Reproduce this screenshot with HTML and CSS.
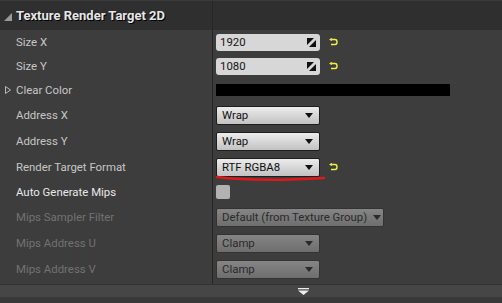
FILE: index.html
```html
<!DOCTYPE html>
<html lang="en">
<head>
  <meta charset="UTF-8">
  <title>Texture Render Target 2D</title>
  <link rel="stylesheet" href="styles.css">
</head>
<body>
  <div class="panel">

    <!-- Category header -->
    <div class="header">
      <div class="header-name">
        <svg class="collapse" width="8" height="8" viewBox="0 0 8 8"><polygon points="8,0 8,8 0,8" fill="#9a9a9a"/></svg>
        <span>Texture Render Target 2D</span>
      </div>
      <div class="header-value"></div>
    </div>

    <!-- Property rows -->
    <div class="rows">
      <div class="label r24">Size X</div>
      <div class="value">
        <div class="numbox"><span>1920</span>
          <svg width="9" height="9" viewBox="0 0 9 9"><polygon points="0,0 7,0 0,7" fill="#111"/><polygon points="9,2 9,9 2,9" fill="#111"/></svg>
        </div>
        <svg class="reset" width="9" height="8" viewBox="0 0 9 8"><path d="M1 1.5 H6 Q8 1.5 8 4 Q8 6.5 6 6.5 H2" fill="none" stroke="#f0f040" stroke-width="1.4"/><polygon points="0,1.5 3,0 3,3" fill="#f0f040"/></svg>
      </div>

      <div class="label r24">Size Y</div>
      <div class="value">
        <div class="numbox"><span>1080</span>
          <svg width="9" height="9" viewBox="0 0 9 9"><polygon points="0,0 7,0 0,7" fill="#111"/><polygon points="9,2 9,9 2,9" fill="#111"/></svg>
        </div>
        <svg class="reset" width="9" height="8" viewBox="0 0 9 8"><path d="M1 1.5 H6 Q8 1.5 8 4 Q8 6.5 6 6.5 H2" fill="none" stroke="#f0f040" stroke-width="1.4"/><polygon points="0,1.5 3,0 3,3" fill="#f0f040"/></svg>
      </div>

      <div class="label r24 expandable">
        <svg class="expand" width="6" height="8" viewBox="0 0 6 8"><polygon points="0.5,0.5 5.5,4 0.5,7.5" fill="none" stroke="#bbb" stroke-width="1"/></svg>
        Clear Color
      </div>
      <div class="value"><div class="swatch"></div></div>

      <div class="label r26">Address X</div>
      <div class="value">
        <div class="combo"><span>Wrap</span><i class="arrow"></i></div>
      </div>

      <div class="label r26">Address Y</div>
      <div class="value">
        <div class="combo"><span>Wrap</span><i class="arrow"></i></div>
      </div>

      <div class="label r26">Render Target Format</div>
      <div class="value marked">
        <div class="combo"><span>RTF RGBA8</span><i class="arrow"></i></div>
        <svg class="reset" width="9" height="8" viewBox="0 0 9 8"><path d="M1 1.5 H6 Q8 1.5 8 4 Q8 6.5 6 6.5 H2" fill="none" stroke="#f0f040" stroke-width="1.4"/><polygon points="0,1.5 3,0 3,3" fill="#f0f040"/></svg>
        <svg class="scribble" width="110" height="8" viewBox="0 0 110 8"><path d="M1 2 Q40 7 108 3" fill="none" stroke="#e01818" stroke-width="2.4" stroke-linecap="round"/></svg>
      </div>

      <div class="label r24 bright">Auto Generate Mips</div>
      <div class="value"><div class="check"></div></div>

      <div class="label r26 off">Mips Sampler Filter</div>
      <div class="value">
        <div class="combo wide disabled"><span>Default (from Texture Group)</span><i class="arrow"></i></div>
      </div>

      <div class="label r26 off">Mips Address U</div>
      <div class="value">
        <div class="combo disabled"><span>Clamp</span><i class="arrow"></i></div>
      </div>

      <div class="label r26 off">Mips Address V</div>
      <div class="value">
        <div class="combo disabled"><span>Clamp</span><i class="arrow"></i></div>
      </div>

      <div class="label pad"></div>
      <div class="value"></div>
    </div>

    <!-- Advanced toggle -->
    <div class="footer">
      <svg width="11" height="7" viewBox="0 0 11 7"><rect x="0" y="0" width="11" height="1.3" fill="#eee"/><polygon points="0,2.5 11,2.5 5.5,7" fill="#eee"/></svg>
    </div>
    <div class="bottom"></div>
  </div>
</body>
</html>
```

FILE: styles.css
```css
/* Details panel */
body {
  margin: 0;
  background-color: #383838;
  font-family: Roboto, "Liberation Sans", sans-serif;
}
.panel {
  width: 502px;
  height: 303px;
  background-color: #3d3d3d;
}

.header {
  display: grid;
  grid-template-columns: 213px 1fr;
  height: 30px;
  background-color: #2f2f2f;
  border-top: 1px solid #3a3a3a;
  box-sizing: border-box;
}
.header-name {
  display: flex;
  align-items: center;
  gap: 4px;
  padding-left: 4px;
  border-right: 1px solid #262626;
  color: #e6e6e6;
  font-size: 13px;
  font-weight: bold;
  text-shadow: 1px 1px 0 #000;
}
.collapse {
  margin-top: 2px;
}

.rows {
  display: grid;
  grid-template-columns: 213px 1fr;
}
.label {
  display: flex;
  align-items: center;
  padding-left: 16px;
  border-right: 1px solid #262626;
  color: #c6c6c6;
  font-size: 11.4px;
}
.r24 { height: 24px; }
.r26 { height: 26px; }
.pad { height: 2px; }
.label.bright { color: #e8e8e8; }
.label.off { color: #727272; }
.expandable {
  position: relative;
}
.expand {
  position: absolute;
  left: 5px;
  top: 8px;
}

.value {
  display: flex;
  align-items: center;
  gap: 9px;
  padding-left: 3px;
}
.marked {
  position: relative;
}

.numbox {
  display: flex;
  align-items: center;
  justify-content: space-between;
  width: 104px;
  height: 17px;
  padding: 0 4px;
  box-sizing: border-box;
  background-color: #d7d7d7;
  border-radius: 3px;
  color: #151515;
  font-size: 11.4px;
}
.reset {
  margin-top: -1px;
}

.swatch {
  width: 234px;
  height: 12px;
  background-color: #000;
}

.combo {
  display: flex;
  align-items: center;
  justify-content: space-between;
  width: 104px;
  height: 19px;
  padding: 0 6px 0 5px;
  box-sizing: border-box;
  background: linear-gradient(#ececec, #c2c2c2);
  border: 1px solid #1e1e1e;
  border-radius: 2px;
  color: #111;
  font-size: 11.4px;
  white-space: nowrap;
}
.combo.wide {
  width: 168px;
  padding-right: 2px;
}
.combo.disabled {
  background: linear-gradient(#858585, #6e6e6e);
  border-color: #333;
  color: #2a2a2a;
}
.arrow {
  width: 0;
  height: 0;
  border-left: 4.5px solid transparent;
  border-right: 4.5px solid transparent;
  border-top: 5px solid #111;
}
.disabled .arrow {
  border-top-color: #2a2a2a;
}

.check {
  width: 14px;
  height: 14px;
  background-color: #b2b2b2;
  border-radius: 2px;
}

.scribble {
  position: absolute;
  left: 3px;
  top: 21px;
}

.footer {
  display: flex;
  align-items: center;
  height: 13px;
  padding-left: 298px;
  box-sizing: border-box;
  background-color: #464646;
  border-top: 1px solid #333;
}
.bottom {
  height: 6px;
  background-color: #383838;
}
```
